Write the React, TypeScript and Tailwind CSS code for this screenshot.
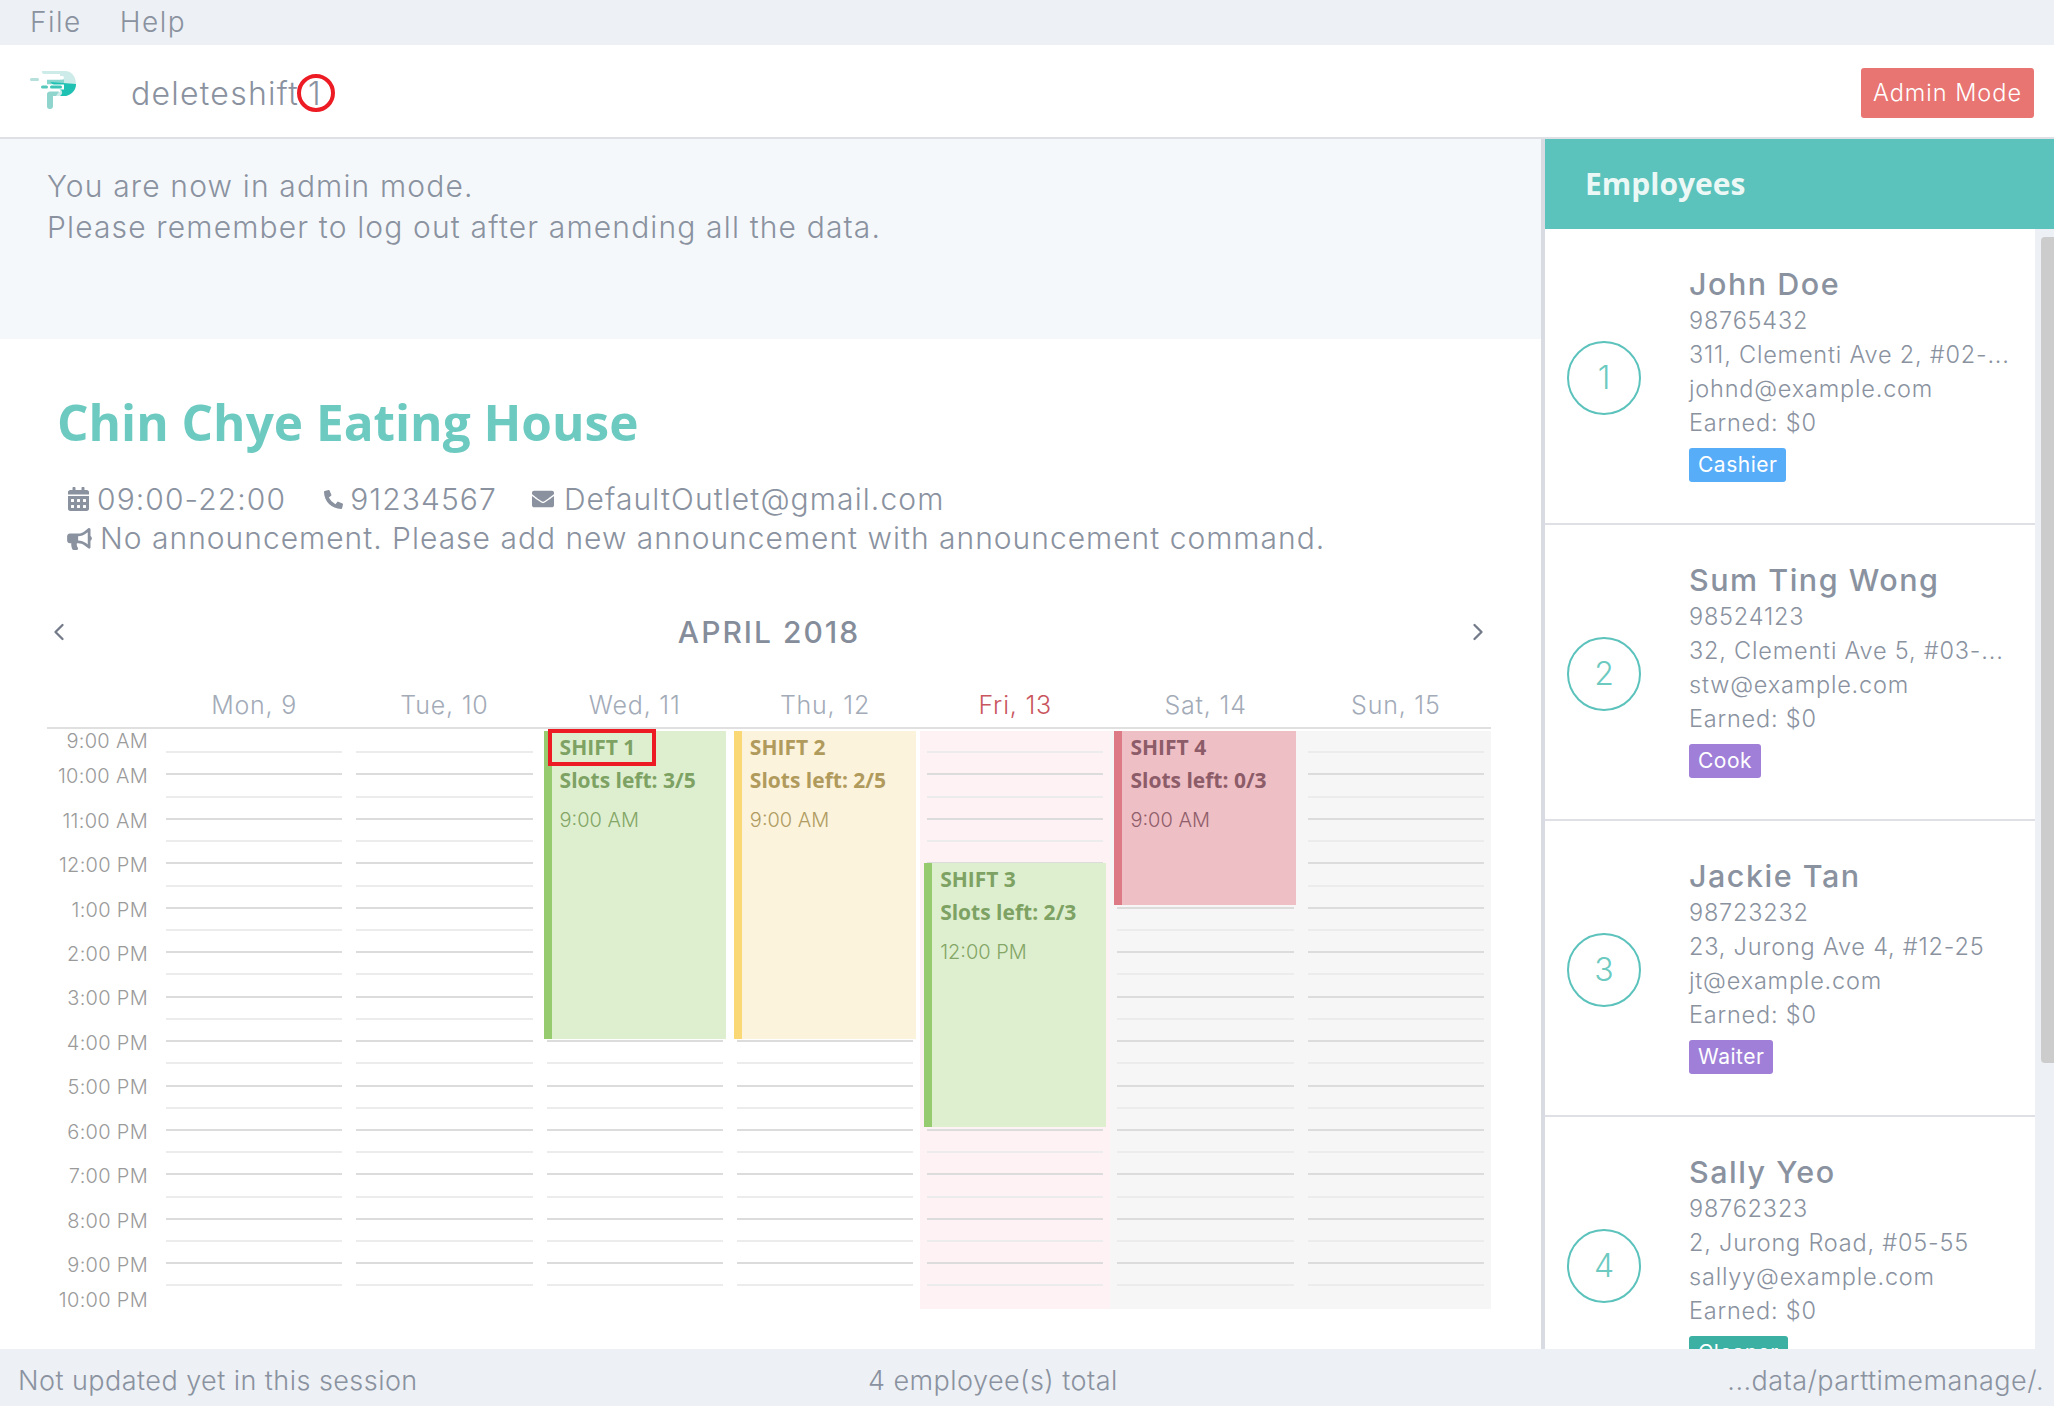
import { ChevronLeft, ChevronRight } from 'lucide-react';
import { FaBullhorn, FaCalendarAlt, FaEnvelope, FaPhoneAlt } from 'react-icons/fa';

const bodyFont = "font-['Inter','Liberation_Sans',sans-serif]";
const headFont = "font-['Open_Sans','Noto_Sans',sans-serif]";

const times = ['10:00 AM', '11:00 AM', '12:00 PM', '1:00 PM', '2:00 PM', '3:00 PM', '4:00 PM', '5:00 PM', '6:00 PM', '7:00 PM', '8:00 PM', '9:00 PM'];

type Shift = {
  title: string;
  slots: string;
  time: string;
  box: string;
  head: string;
  sub: string;
  marked?: boolean;
};

type Day = { label: string; bg: string; labelColor: string; shift?: Shift };

const days: Day[] = [
  { label: 'Mon, 9', bg: 'bg-white', labelColor: 'text-[#a3abb8]' },
  { label: 'Tue, 10', bg: 'bg-white', labelColor: 'text-[#a3abb8]' },
  {
    label: 'Wed, 11',
    bg: 'bg-white',
    labelColor: 'text-[#a3abb8]',
    shift: {
      title: 'SHIFT 1',
      slots: 'Slots left: 3/5',
      time: '9:00 AM',
      box: 'top-0 h-[308px] bg-[#deefd0] border-[#96cc6f]',
      head: 'text-[#7da263]',
      sub: 'text-[#84a666]',
      marked: true,
    },
  },
  {
    label: 'Thu, 12',
    bg: 'bg-white',
    labelColor: 'text-[#a3abb8]',
    shift: {
      title: 'SHIFT 2',
      slots: 'Slots left: 2/5',
      time: '9:00 AM',
      box: 'top-0 h-[308px] bg-[#fbf3dc] border-[#f9d875]',
      head: 'text-[#b09a5c]',
      sub: 'text-[#b09c62]',
    },
  },
  {
    label: 'Fri, 13',
    bg: 'bg-[#fef2f5]',
    labelColor: 'text-[#c9565e]',
    shift: {
      title: 'SHIFT 3',
      slots: 'Slots left: 2/3',
      time: '12:00 PM',
      box: 'top-[132px] h-[264px] bg-[#deefd0] border-[#96cc6f]',
      head: 'text-[#7da263]',
      sub: 'text-[#84a666]',
    },
  },
  {
    label: 'Sat, 14',
    bg: 'bg-[#f6f6f6]',
    labelColor: 'text-[#a3abb8]',
    shift: {
      title: 'SHIFT 4',
      slots: 'Slots left: 0/3',
      time: '9:00 AM',
      box: 'top-0 h-[174px] bg-[#efbfc6] border-[#dc7a85]',
      head: 'text-[#8c5c68]',
      sub: 'text-[#8f5e6a]',
    },
  },
  { label: 'Sun, 15', bg: 'bg-[#f6f6f6]', labelColor: 'text-[#a3abb8]' },
];

const employees = [
  { name: 'John Doe', phone: '98765432', address: '311, Clementi Ave 2, #02-...', email: 'johnd@example.com', tag: 'Cashier', tagColor: 'bg-[#58adf9]' },
  { name: 'Sum Ting Wong', phone: '98524123', address: '32, Clementi Ave 5, #03-...', email: 'stw@example.com', tag: 'Cook', tagColor: 'bg-[#a07fd8]' },
  { name: 'Jackie Tan', phone: '98723232', address: '23, Jurong Ave 4, #12-25', email: 'jt@example.com', tag: 'Waiter', tagColor: 'bg-[#a07fd8]' },
  { name: 'Sally Yeo', phone: '98762323', address: '2, Jurong Road, #05-55', email: 'sallyy@example.com', tag: 'Cleaner', tagColor: 'bg-[#3bb0a3]' },
];

function Logo() {
  return (
    <svg width="48" height="42" viewBox="0 0 48 42" fill="none">
      <defs>
        <linearGradient id="logoTop" x1="12" y1="0" x2="46" y2="14">
          <stop offset="0" stopColor="#cdebe8" />
          <stop offset="1" stopColor="#6fcfc6" />
        </linearGradient>
      </defs>
      <path d="M12 1H35C42 1 46 7 46 14C46 21 41 26 34 26H23V36C23 38 21.5 39 20 39C18 39 17 38 17 36V26C17 24 18 22 20 22H30V4H14C12.5 4 11.5 2.5 12 1Z" fill="url(#logoTop)" />
      <rect x="17" y="9.5" width="17" height="5" fill="#86d6cd" />
      <path d="M20 12L46 14C46 20 42 24 36 26H30C33 24 33 20 29 19Z" fill="#1fc1b3" />
      <path d="M17 24C17 22.5 18.5 21.5 20 21.5H29L26 26H23V36C23 38 21.5 39 20 39C18 39 17 38 17 36Z" fill="#8fd5cd" />
      <rect x="0" y="8" width="9" height="3" rx="1.5" fill="#b5e0dc" />
      <rect x="13" y="6" width="21" height="3.5" rx="1.7" fill="#fff" />
      <rect x="11" y="14.5" width="23" height="5" fill="#fff" />
      <rect x="11" y="15.5" width="7" height="3" rx="1.5" fill="#56c7bb" />
      <rect x="20" y="15.5" width="12" height="3" rx="1.5" fill="#3cc4b7" />
    </svg>
  );
}

function DayColumn({ day }: { day: Day }) {
  return (
    <div className={`relative flex-1 flex flex-col ${day.bg}`}>
      {Array.from({ length: 26 }).map((_, i) => (
        <div key={i} className="h-[22.23px] px-[7px] flex flex-col justify-end">
          {i < 25 && <div className={`h-[2px] ${i % 2 === 0 ? 'bg-[#ececec]' : 'bg-[#dcdcdc]'}`} />}
        </div>
      ))}
      {day.shift && (
        <div className={`absolute left-[4px] w-[182px] border-l-[8px] pl-[8px] ${day.shift.box}`}>
          <div className={`mt-[3px] h-[27px] leading-[27px] text-[21px] font-bold ${headFont} ${day.shift.head}`}>{day.shift.title}</div>
          <div className={`mt-[6px] h-[27px] leading-[27px] text-[21px] font-bold ${headFont} ${day.shift.head}`}>{day.shift.slots}</div>
          <div className={`mt-[13px] h-[27px] leading-[27px] text-[20px] font-light ${bodyFont} ${day.shift.sub}`}>{day.shift.time}</div>
          {day.shift.marked && <div className="absolute left-[-4px] top-[-2px] w-[108px] h-[37px] border-[4px] border-[#ed1c24]" />}
        </div>
      )}
    </div>
  );
}

function Calendar() {
  return (
    <div className="ml-[47px] w-[1444px] mt-[54px]">
      <div className="relative flex items-center justify-center h-[40px]">
        <ChevronLeft className="absolute left-[-2px] w-[28px] h-[28px] text-[#737b8a]" strokeWidth={2} />
        <span className={`text-[30px] tracking-[2px] font-medium text-[#858d9b] ${bodyFont}`}>APRIL 2018</span>
        <ChevronRight className="absolute right-[-1px] w-[28px] h-[28px] text-[#737b8a]" strokeWidth={2} />
      </div>
      <div className="flex mt-[31px] h-[46px] pl-[112px] border-b-[2px] border-[#e0e0e0]">
        {days.map((day) => (
          <div key={day.label} className={`flex-1 text-center leading-[44px] text-[25px] tracking-[0.8px] font-light ${bodyFont} ${day.labelColor}`}>
            {day.label}
          </div>
        ))}
      </div>
      <div className="flex mt-[2px]">
        <div className={`w-[112px] pr-[11px] flex flex-col items-end text-[20px] tracking-[0.3px] font-light text-[#9a9a9a] ${bodyFont}`}>
          <div className="h-[22.23px] leading-[20px]">9:00 AM</div>
          {times.map((t) => (
            <div key={t} className="h-[44.46px] leading-[46px]">{t}</div>
          ))}
          <div className="h-[22.23px] leading-[26px]">10:00 PM</div>
        </div>
        {days.map((day) => (
          <DayColumn key={day.label} day={day} />
        ))}
      </div>
    </div>
  );
}

function EmployeeCard({ person, index }: { person: (typeof employees)[number]; index: number }) {
  return (
    <div className="h-[296px] shrink-0 flex items-start border-b-[2px] border-[#dfe0e6] pl-[22px]">
      <div className="mt-[112px] w-[74px] h-[74px] shrink-0 rounded-full border-[2px] border-[#5bc2bc] flex items-center justify-center text-[32px] font-light text-[#6ccac1]">
        {index + 1}
      </div>
      <div className="ml-[48px] pt-[35px] text-[23.5px] tracking-[0.8px] font-light leading-[34px] text-[#8a92a0] whitespace-nowrap">
        <div className="text-[30.5px] tracking-[1.5px] font-medium leading-[40px]">{person.name}</div>
        <div>{person.phone}</div>
        <div>{person.address}</div>
        <div>{person.email}</div>
        <div>Earned: $0</div>
        <div className="flex mt-[8px]">
          <span className={`h-[34px] px-[9px] rounded-[3px] text-[21px] tracking-[0.5px] font-normal leading-[34px] text-white ${person.tagColor}`}>{person.tag}</span>
        </div>
      </div>
    </div>
  );
}

export default function App() {
  return (
    <div className={`w-[2054px] h-[1406px] flex flex-col overflow-hidden bg-white text-[#8a92a0] ${bodyFont}`}>
      <div className="h-[45px] shrink-0 bg-[#edf0f4] flex items-center pl-[30px] pb-[2px] gap-[38px] text-[28px] tracking-[1.5px] font-light">
        <span>File</span>
        <span>Help</span>
      </div>

      <div className="h-[94px] shrink-0 border-b-[2px] border-[#dfe0e6] flex items-center pl-[30px] pr-[20px]">
        <Logo />
        <div className="ml-[53px] mt-[5px] text-[32px] tracking-[1.25px] font-light">
          deleteshift
          <span className="relative ml-[9px]">
            1
            <span className="absolute left-[-11px] top-[0px] w-[38px] h-[38px] rounded-full border-[4px] border-[#ed1c24]" />
          </span>
        </div>
        <button className="ml-auto mt-[3px] w-[173px] h-[50px] rounded-[3px] bg-[#e87572] text-white text-[23.5px] tracking-[1px] font-light">Admin Mode</button>
      </div>

      <div className="flex-1 min-h-0 flex">
        <div className="w-[1541px] shrink-0 flex flex-col">
          <div className="h-[200px] shrink-0 bg-[#f5f8fb] pt-[27px] pl-[47px] text-[30px] tracking-[1.15px] font-light leading-[40.5px]">
            <div>You are now in admin mode.</div>
            <div>Please remember to log out after amending all the data.</div>
          </div>
          <div className={`ml-[57px] mt-[52px] h-[62px] leading-[62px] text-[49.5px] font-bold text-[#6ccac1] ${headFont}`}>Chin Chye Eating House</div>
          <div className="ml-[67px] mt-[26px] h-[40px] flex items-center text-[30px] tracking-[1.1px] font-light">
            <FaCalendarAlt className="w-[23px] h-[24px] mr-[7px]" />
            <span>09:00-22:00</span>
            <FaPhoneAlt className="w-[19px] h-[19px] ml-[38px] mr-[7px]" />
            <span>91234567</span>
            <FaEnvelope className="w-[24px] h-[22px] ml-[34px] mr-[9px]" />
            <span>DefaultOutlet@gmail.com</span>
          </div>
          <div className="ml-[67px] h-[39px] flex items-center text-[30px] tracking-[1px] font-light">
            <FaBullhorn className="w-[25px] h-[22px] mr-[8px]" />
            <span>No announcement. Please add new announcement with announcement command.</span>
          </div>
          <Calendar />
        </div>

        <div className="flex-1 min-w-0 border-l-[4px] border-[#d9dbe2] flex flex-col">
          <div className={`h-[90px] shrink-0 bg-[#5bc2bc] pl-[40px] leading-[90px] text-[30px] font-bold text-[#ecf8f5] ${headFont}`}>Employees</div>
          <div className="flex-1 min-h-0 flex overflow-hidden">
            <div className="flex-1 flex flex-col">
              {employees.map((person, i) => (
                <EmployeeCard key={person.name} person={person} index={i} />
              ))}
            </div>
            <div className="w-[19px] shrink-0 bg-[#edf0f4] pt-[8px] pl-[6px]">
              <div className="h-[826px] rounded-l-[4px] bg-[#cccccc]" />
            </div>
          </div>
        </div>
      </div>

      <div className="h-[57px] shrink-0 bg-[#edf0f4] flex items-center pt-[8px] pl-[18px] pr-[10px] text-[27px] tracking-[0.45px] font-light">
        <span className="w-[850px] shrink-0">Not updated yet in this session</span>
        <span>4 employee(s) total</span>
        <span className="ml-auto">...data/parttimemanage/.</span>
      </div>
    </div>
  );
}
